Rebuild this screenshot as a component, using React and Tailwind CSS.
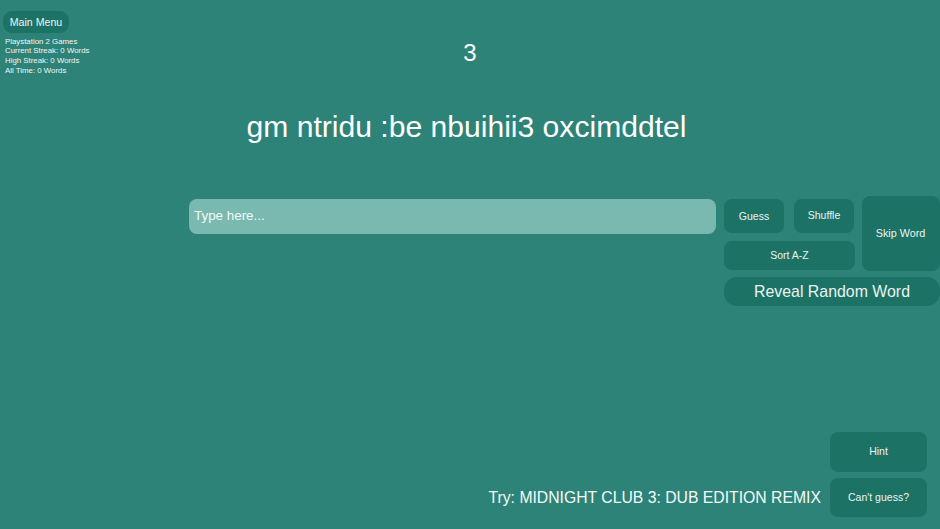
export default function App() {
  const btn = "flex items-center justify-center bg-[#1d7266] text-[#e8f4f2]";
  return (
    <div className="flex flex-col h-[529px] w-[940px] overflow-hidden bg-[#2d8377] text-white font-['Liberation_Sans',Arial,sans-serif]">
      <div className="grid grid-cols-[1fr_auto_1fr] h-[76px]">
        <div className="pl-[3px] pt-[11px]">
          <div className={btn + " w-[66px] h-[22px] pt-[1px] rounded-[9px] text-[10.6px]"}>Main Menu</div>
          <div className="pl-[2px] pt-[3.5px] text-[7.85px] leading-[9.7px] text-[#eef7f5]">
            <div>Playstation 2 Games</div>
            <div>Current Streak: 0 Words</div>
            <div>High Streak: 0 Words</div>
            <div>All Time: 0 Words</div>
          </div>
        </div>
        <div className="pt-[39px] text-[24px] leading-[28px] text-center">3</div>
        <div />
      </div>
      <div className="pt-[33px] pr-[7px] h-[123px] text-center text-[30.1px] leading-[35px]">gm ntridu :be nbuihii3 oxcimddtel</div>
      <div className="flex pl-[189px]">
        <div className="flex items-center w-[527px] h-[35px] pl-[5px] rounded-[8px] bg-[#79b9b0] text-[13.4px] text-[#f2faf8]">Type here...</div>
        <div className="ml-[8px] w-[216px] -mt-[3px]">
          <div className="flex">
            <div className="w-[131px] pt-[3px]">
              <div className="flex justify-between w-[130px]">
                <div className={btn + " w-[60px] h-[34px] pt-[1px] rounded-[8px] text-[10.5px]"}>Guess</div>
                <div className={btn + " w-[60px] h-[34px] pb-[1px] rounded-[8px] text-[10.5px]"}>Shuffle</div>
              </div>
              <div className={btn + " w-[131px] h-[29px] mt-[8px] rounded-[8px] text-[10.5px]"}>Sort A-Z</div>
            </div>
            <div className={btn + " ml-[7px] w-[78px] h-[75px] pr-[1px] rounded-[8px] text-[10.8px]"}>Skip Word</div>
          </div>
          <div className={btn + " w-[216px] h-[29px] mt-[6px] rounded-[13px] text-[15.9px]"}>Reveal Random Word</div>
        </div>
      </div>
      <div className="flex flex-col items-end mt-auto pr-[13px] pb-[12px]">
        <div className={btn + " w-[97px] h-[40px] rounded-[8px] text-[10.5px]"}>Hint</div>
        <div className="flex items-center mt-[6px]">
          <div className="mr-[9px] text-[15.75px] text-[#f4fbfa]">Try: MIDNIGHT CLUB 3: DUB EDITION REMIX</div>
          <div className={btn + " w-[97px] h-[39px] rounded-[8px] text-[10.5px]"}>Can't guess?</div>
        </div>
      </div>
    </div>
  );
}
